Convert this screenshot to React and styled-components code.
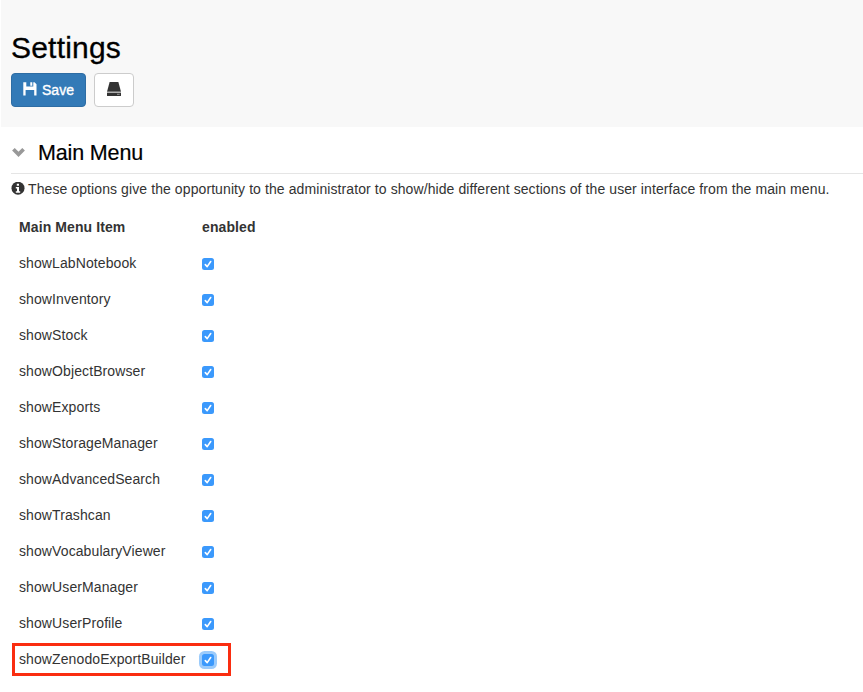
import React from 'react';
import styled, { createGlobalStyle, css } from 'styled-components';

const GlobalStyle = createGlobalStyle`
  * { box-sizing: border-box; }
  body {
    margin: 0;
    background: #fff;
    color: #333;
    font: 14px/20px "Liberation Sans", Arial, sans-serif;
    overflow: hidden;
  }
`;

const Page = styled.div`
  height: 692px;
  overflow: hidden;
`;

const Header = styled.header`
  height: 127px;
  margin-left: 1px;
  padding: 31px 10px 0;
  background: #f8f8f8;
`;

const Title = styled.h1`
  margin: 0 0 9px;
  color: #000;
  font-size: 30px;
  font-weight: 400;
  line-height: 33px;
  letter-spacing: 0.2px;
  -webkit-text-stroke: 0.3px;
`;

const Toolbar = styled.div`
  display: flex;
  gap: 8px;
`;

const Button = styled.button`
  display: flex;
  align-items: center;
  justify-content: center;
  gap: 5px;
  width: ${(p) => (p.$primary ? 75 : 40)}px;
  height: 34px;
  padding: 0;
  border: 1px solid ${(p) => (p.$primary ? '#2e6da4' : '#ccc')};
  border-radius: 4px;
  background: ${(p) => (p.$primary ? '#337ab7' : '#fff')};
  color: ${(p) => (p.$primary ? '#fff' : '#333')};
  font: 14px/20px "Liberation Sans", Arial, sans-serif;
  -webkit-text-stroke: ${(p) => (p.$primary ? '0.35px' : '0')};

  svg { display: block; margin-top: -2px; }
`;

const Section = styled.section`
  padding-left: 11px;
`;

const SectionHeader = styled.div`
  display: flex;
  align-items: center;
  gap: 12px;
  height: 47px;
  padding: 5px 0 0 1px;
  border-bottom: 1px solid #e5e5e5;

  svg { margin-top: -2px; }
`;

const SectionTitle = styled.h2`
  margin: 0;
  color: #000;
  font-size: 21.5px;
  font-weight: 400;
  line-height: 24px;
  letter-spacing: -0.15px;
  -webkit-text-stroke: 0.2px;
`;

const Info = styled.p`
  display: flex;
  align-items: center;
  gap: 3px;
  height: 20px;
  margin: 5px 0 10px;
  white-space: nowrap;
`;

const InfoText = styled.span`
  letter-spacing: 0.092px;
`;

const Row = styled.div`
  position: relative;
  display: grid;
  grid-template-columns: 183px 1fr;
  align-items: center;
  height: 36px;
  padding-left: 8px;
  font-weight: ${(p) => (p.$head ? 700 : 400)};
`;

const Label = styled.span`
  letter-spacing: 0.1px;
`;

const Check = styled.span`
  display: block;
  width: 12px;
  height: 12px;
  margin-top: 2px;
  border-radius: 2.5px;
  background: #3b99fc;
  ${(p) => p.$focused && css`box-shadow: 0 0 0 3px #9bcbfb;`}

  svg { display: block; }
`;

const Highlight = styled.div`
  position: absolute;
  left: 1px;
  top: 2px;
  width: 219px;
  height: 33px;
  border: 3px solid #fa2d10;
`;

const items = [
  'showLabNotebook',
  'showInventory',
  'showStock',
  'showObjectBrowser',
  'showExports',
  'showStorageManager',
  'showAdvancedSearch',
  'showTrashcan',
  'showVocabularyViewer',
  'showUserManager',
  'showUserProfile',
  'showZenodoExportBuilder',
];

const SaveIcon = () => (
  <svg width="14" height="14" viewBox="0 0 14 14" fill="currentColor">
    <path d="M.3.2h3v4.4h7V.2h1.2l2 2v11.3h-2.3V8H2.6v5.5H.3zM7.3.2h2v3.6h-2z" />
  </svg>
);

const DriveIcon = () => (
  <svg width="14" height="14" viewBox="0 0 14 14">
    <path d="M3.2 0h7.6q.5 0 .7.5L14 9.8H0L2.5.5Q2.7 0 3.2 0z" fill="#333" />
    <path d="M0 10.8h14v2.6q0 .6-.6.6H.6q-.6 0-.6-.6z" fill="#333" />
    <path d="M0 10.3h14" stroke="#aaa" />
    <path d="M10 12.3h2.7" stroke="#999" />
  </svg>
);

const ChevronIcon = () => (
  <svg width="14" height="14" viewBox="0 0 14 14">
    <path d="M1.4 4.2 6.5 9.3l5.1-5.1" fill="none" stroke="#999" strokeWidth="3.7" />
  </svg>
);

const InfoIcon = () => (
  <svg width="14" height="14" viewBox="0 0 14 14">
    <circle cx="7" cy="6.2" r="6.5" fill="#333" />
    <path d="M5.8 1.8H8v2H5.8zM4.8 5H8v4.2h1.2v1.5H4.8V9.2H6V6.4H4.8z" fill="#fff" />
  </svg>
);

const CheckBox = ({ focused }) => (
  <Check role="checkbox" aria-checked="true" $focused={focused}>
    <svg width="12" height="12" viewBox="0 0 12 12">
      <path d="M3.3 6.6 5.2 8.6 8.7 3.5" fill="none" stroke="#fff" strokeWidth="1.6" strokeLinecap="round" strokeLinejoin="round" />
    </svg>
  </Check>
);

export default function App() {
  return (
    <Page>
      <GlobalStyle />
      <Header>
        <Title>Settings</Title>
        <Toolbar>
          <Button $primary><SaveIcon />Save</Button>
          <Button aria-label="Storage"><DriveIcon /></Button>
        </Toolbar>
      </Header>
      <Section>
        <SectionHeader>
          <ChevronIcon />
          <SectionTitle>Main Menu</SectionTitle>
        </SectionHeader>
        <Info>
          <InfoIcon />
          <InfoText>
            These options give the opportunity to the administrator to show/hide different sections of the user interface from the main menu.
          </InfoText>
        </Info>
        <Row $head>
          <Label>Main Menu Item</Label>
          <Label>enabled</Label>
        </Row>
        {items.map((name, i) => {
          const last = i === items.length - 1;
          return (
            <Row key={name}>
              <Label>{name}</Label>
              <CheckBox focused={last} />
              {last && <Highlight />}
            </Row>
          );
        })}
      </Section>
    </Page>
  );
}
